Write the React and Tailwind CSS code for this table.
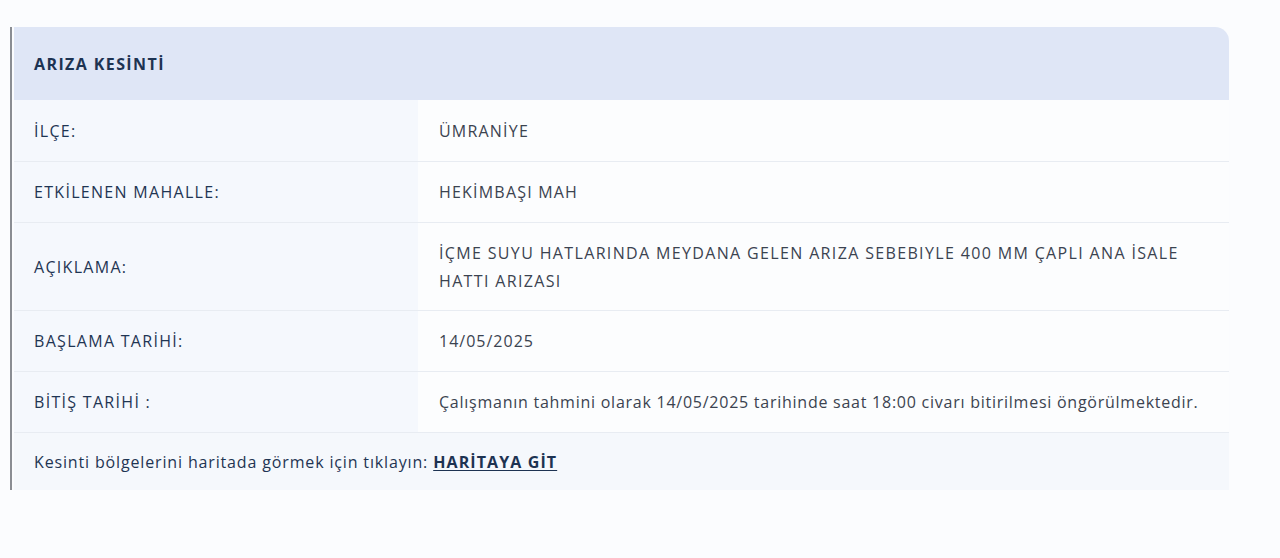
const rows = [
  { label: 'İLÇE:', value: 'ÜMRANİYE', h: 'h-[61px]', t: 'tracking-[1.2px]' },
  { label: 'ETKİLENEN MAHALLE:', value: 'HEKİMBAŞI MAH', h: 'h-[61px]', t: 'tracking-[1.2px]' },
  {
    label: 'AÇIKLAMA:',
    value: 'İÇME SUYU HATLARINDA MEYDANA GELEN ARIZA SEBEBIYLE 400 MM ÇAPLI ANA İSALE HATTI ARIZASI',
    h: 'h-[88px]',
    t: 'tracking-[1.35px]',
  },
  { label: 'BAŞLAMA TARİHİ:', value: '14/05/2025', h: 'h-[61px]', t: 'tracking-[1px]' },
  {
    label: 'BİTİŞ TARİHİ :',
    value: 'Çalışmanın tahmini olarak 14/05/2025 tarihinde saat 18:00 civarı bitirilmesi öngörülmektedir.',
    h: 'h-[61px]',
    t: 'tracking-[0.75px]',
  },
]

export default function App() {
  return (
    <div className="min-h-[558px] bg-[#fbfcfe] pt-[27px] pl-[10px] text-[16px]"
      style={{ fontFamily: '"Open Sans", "Noto Sans", sans-serif' }}>
      <div className="flex w-[1219px]">
        {/* left rule */}
        <div className="w-[2px] bg-[#8a8d93] shrink-0"></div>
        <div className="ml-[2px] flex-1 rounded-tr-[14px] overflow-hidden">
          <div className="h-[73px] bg-[#dfe6f6] flex items-center px-[20px] font-bold tracking-[1.4px] text-[#1d3352]">
            ARIZA KESİNTİ
          </div>
          {rows.map((r, i) => (
            <div key={i} className={`flex ${r.h} ${i > 0 ? 'border-t border-[#e8ecf2]' : ''}`}>
              <div className="w-[404px] shrink-0 bg-[#f5f8fd] flex items-center pl-[20px] text-[#1f3553] font-medium tracking-[1.3px]">
                {r.label}
              </div>
              <div className={`flex-1 bg-[#fcfdfe] flex items-center pl-[21px] pr-[28px] text-[#3b4350] leading-[28px] ${r.t}`}>
                {r.value}
              </div>
            </div>
          ))}
          <div className="h-[58px] border-t border-[#e8ecf2] bg-[#f5f8fc] flex items-center pl-[20px] text-[#1f3553] tracking-[0.85px]">
            Kesinti bölgelerini haritada görmek için tıklayın:&nbsp;
            <a href="#" className="font-bold underline underline-offset-2 tracking-[1.1px] text-[#1d3352]">HARİTAYA GİT</a>
          </div>
        </div>
      </div>
    </div>
  )
}
